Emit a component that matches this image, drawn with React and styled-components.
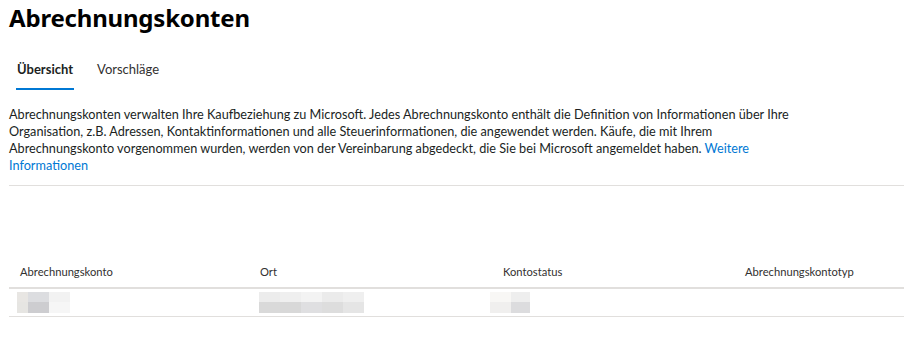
import React from "react";
import styled, { createGlobalStyle } from "styled-components";

const GlobalStyle = createGlobalStyle`
  html, body {
    margin: 0;
    padding: 0;
    background: #ffffff;
  }
  body {
    font-family: "Lato", "Noto Sans", sans-serif;
    color: #323130;
  }
`;

const Page = styled.div`
  padding: 0 0 0 9px;
  width: 895px;
  overflow: hidden;
`;

const Title = styled.h1`
  margin: 0;
  padding-top: 2px;
  font-family: "Noto Sans", sans-serif;
  font-size: 24px;
  line-height: 32px;
  font-weight: 700;
  color: #000000;
  letter-spacing: -0.2px;
`;

const Tabs = styled.div`
  display: flex;
  gap: 24px;
  margin-top: 26px;
  padding-left: 8px;
`;

const Tab = styled.div`
  position: relative;
  height: 30px;
  font-size: 13px;
  line-height: 18px;
  font-weight: ${(p) => (p.active ? 700 : 400)};
  color: ${(p) => (p.active ? "#201f1e" : "#323130")};

  &::after {
    content: "";
    display: ${(p) => (p.active ? "block" : "none")};
    position: absolute;
    left: -1px;
    right: -1px;
    bottom: 0;
    height: 2px;
    background: #0078d4;
  }
`;

const Intro = styled.p`
  margin: 16px 0 0 0;
  width: 790px;
  font-size: 12.7px;
  line-height: 17px;
  color: #201f1e;
`;

const Link = styled.a`
  color: #0078d4;
  text-decoration: none;
`;

const Divider = styled.div`
  margin-top: 11px;
  height: 1px;
  background: #e1dfdd;
`;

const Table = styled.div`
  margin-top: 69px;
`;

const Row = styled.div`
  display: grid;
  grid-template-columns: 240px 243px 242px 1fr;
  align-items: center;
  height: ${(p) => (p.header ? "32px" : "27px")};
  border-bottom: ${(p) => (p.header ? "2px" : "1px")} solid #e1dfdd;
`;

const HeadCell = styled.div`
  padding-left: 11px;
  font-size: 11.2px;
  color: #323130;
`;

const Cell = styled.div`
  display: flex;
  align-items: center;
`;

const Mosaic = styled.div`
  display: grid;
  grid-template-columns: ${(p) => p.cols};
  grid-template-rows: 10px 11px;
  margin-left: ${(p) => p.offset}px;
`;

const Pixel = styled.div`
  background: ${(p) => p.color};
`;

const blurred = [
  {
    offset: 8,
    cols: "11px 21px 21px",
    colors: ["#e8e6e3", "#dcdde0", "#f2f2f2", "#e6e5e2", "#cdcdd0", "#f6f6f6"],
  },
  {
    offset: 10,
    cols: "21px 21px 21px 21px 21px",
    colors: [
      "#ececec", "#efefef", "#f3f3f3", "#ebebeb", "#efefef",
      "#d9d9d9", "#d8d8d8", "#dfdfe1", "#dddddd", "#e5e5e5",
    ],
  },
  {
    offset: -2,
    cols: "21px 19px",
    colors: ["#f8f7f5", "#eeeeee", "#f0efee", "#dcdcde"],
  },
];

const columns = ["Abrechnungskonto", "Ort", "Kontostatus", "Abrechnungskontotyp"];

export default function App() {
  return (
    <>
      <GlobalStyle />
      <Page>
        <Title>Abrechnungskonten</Title>
        <Tabs>
          <Tab active>Übersicht</Tab>
          <Tab>Vorschläge</Tab>
        </Tabs>
        <Intro>
          Abrechnungskonten verwalten Ihre Kaufbeziehung zu Microsoft. Jedes
          Abrechnungskonto enthält die Definition von Informationen über Ihre
          Organisation, z.B. Adressen, Kontaktinformationen und alle
          Steuerinformationen, die angewendet werden. Käufe, die mit Ihrem
          Abrechnungskonto vorgenommen wurden, werden von der Vereinbarung
          abgedeckt, die Sie bei Microsoft angemeldet haben.{" "}
          <Link href="#">Weitere Informationen</Link>
        </Intro>
        <Divider />
        <Table>
          <Row header>
            {columns.map((c) => (
              <HeadCell key={c}>{c}</HeadCell>
            ))}
          </Row>
          <Row>
            {blurred.map((b, i) => (
              <Cell key={i}>
                <Mosaic offset={b.offset} cols={b.cols}>
                  {b.colors.map((c, j) => (
                    <Pixel key={j} color={c} />
                  ))}
                </Mosaic>
              </Cell>
            ))}
            <Cell />
          </Row>
        </Table>
      </Page>
    </>
  );
}
